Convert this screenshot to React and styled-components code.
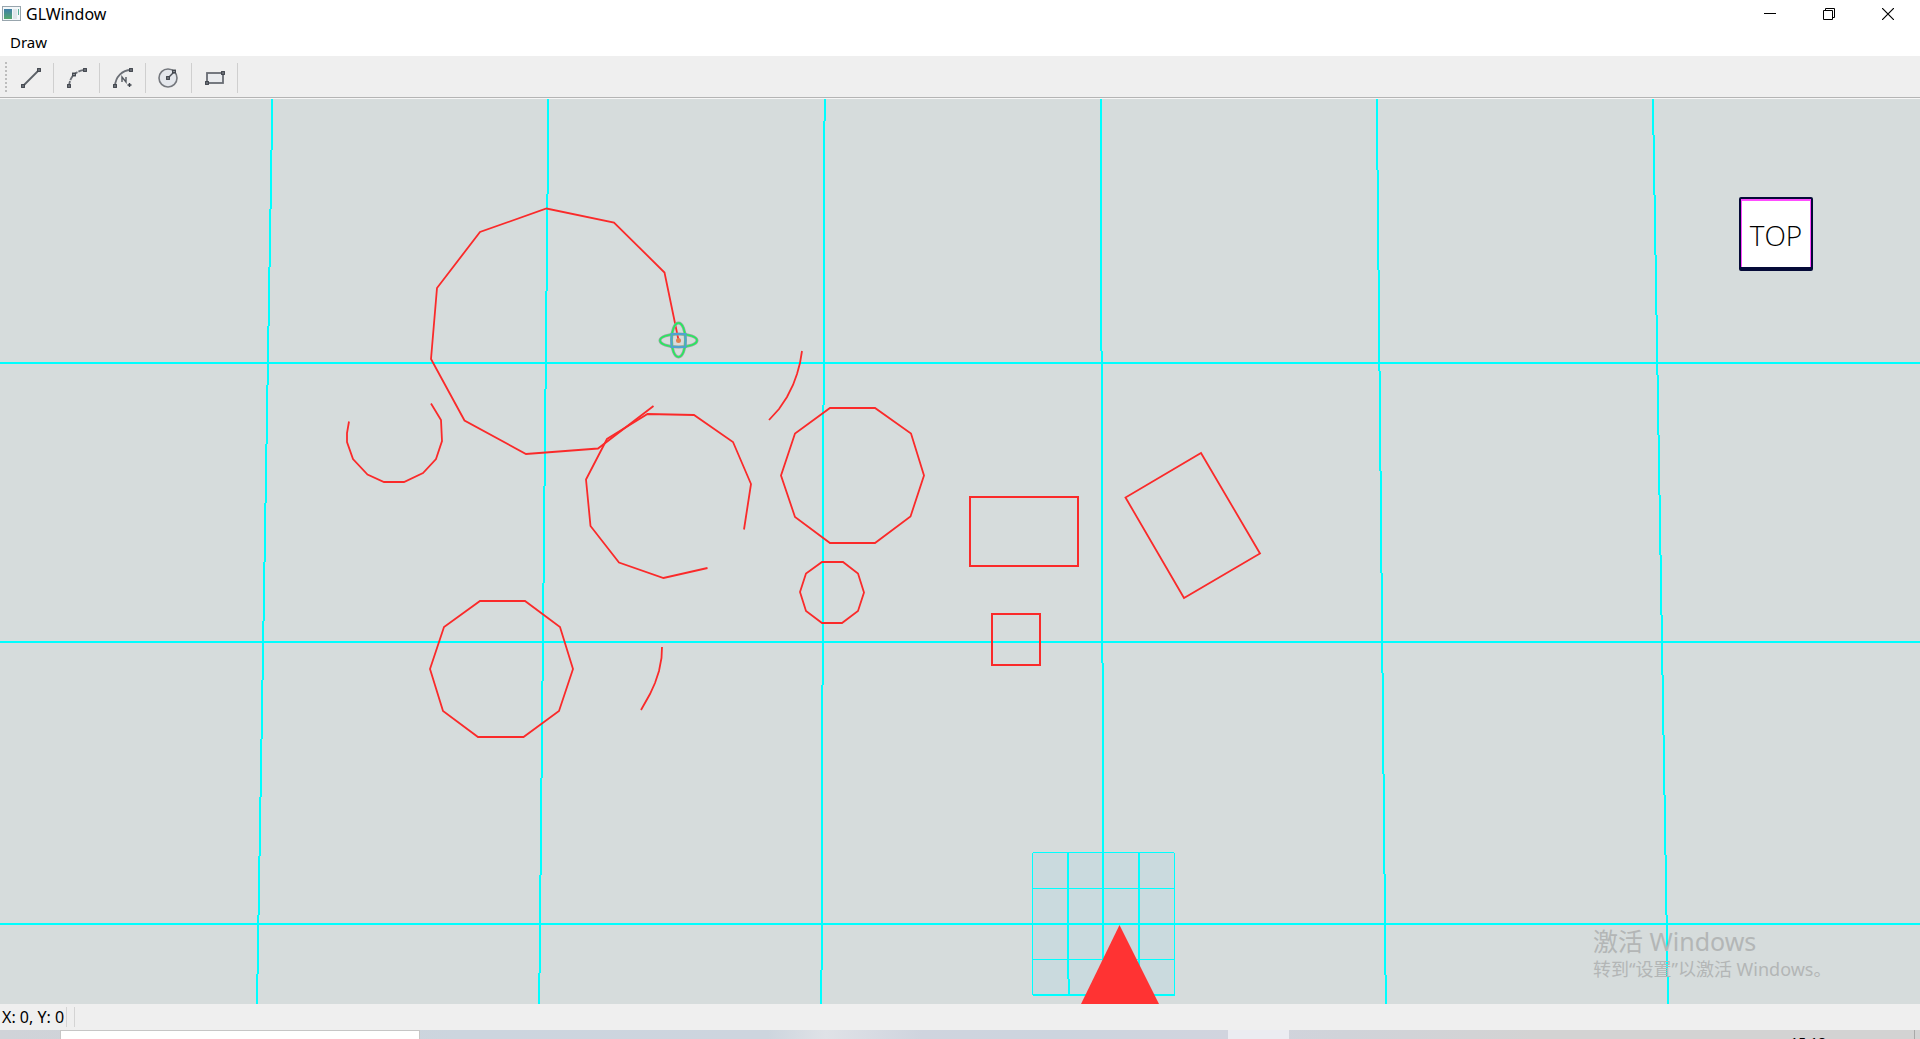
import React from "react";
import styled, { createGlobalStyle } from "styled-components";

const Global = createGlobalStyle`
  *, *::before, *::after { box-sizing: border-box; }
  body {
    margin: 0;
    overflow: hidden;
    font-family: "Noto Sans", "Noto Sans CJK SC", sans-serif;
    font-size: 15px;
    line-height: 20px;
    color: #000;
  }
  button {
    font: inherit;
    color: inherit;
    border: 0;
    padding: 0;
    background: transparent;
  }
`;

const Desktop = styled.div`
  display: flex;
  flex-direction: column;
  height: 100vh;
  overflow: hidden;
`;

const TitleBar = styled.header`
  display: flex;
  align-items: center;
  height: 28px;
  padding-left: 2px;
  background: #fff;
`;

const Title = styled.h1`
  flex: 1;
  margin: 0 0 0 5px;
  font-size: 16px;
  font-weight: 400;
`;

const WindowButton = styled.button`
  display: grid;
  place-items: center;
  width: 59px;
  height: 28px;
`;

const WindowControls = styled.div`
  display: flex;
  padding-right: 3px;
`;

const MenuBar = styled.nav`
  display: flex;
  height: 28px;
  padding-left: 2px;
  background: #fff;
`;

const MenuItem = styled.button`
  padding: 0 8px;
`;

const Toolbar = styled.div`
  display: flex;
  align-items: center;
  height: 43px;
  padding-top: 1px;
  padding-left: 5px;
  background: #efefef;
  border-bottom: 1px solid #f6f6f6;
  box-shadow: inset 0 -1px #b4b4b4;
`;

const Grip = styled.div`
  width: 2px;
  height: 32px;
  margin-right: 1px;
  background: repeating-linear-gradient(#bdbdbd 0 2px, transparent 2px 4px);
`;

const ToolCell = styled.div`
  display: grid;
  place-items: center;
  width: 46px;
  height: 30px;
  border-right: 1px solid #cfcfcf;
`;

const ToolButton = styled.button`
  display: grid;
  place-items: center;
  width: 30px;
  height: 30px;
`;

const Canvas = styled.main`
  position: relative;
  flex: 1;
  min-height: 0;
  overflow: hidden;
  background: #d6dcdc;
`;

const Scene = styled.svg`
  display: block;
  width: 100%;
  height: 100%;
`;

const ViewCube = styled.button`
  position: absolute;
  top: 98px;
  right: 107px;
  width: 74px;
  height: 74px;
  border: 2px solid #050b38;
  border-bottom-width: 4px;
  border-radius: 2px;
  background: #fff;
  box-shadow: inset 1px 2px #ff4dff, inset -1px 0 #ff4dff;
  color: #000;
  font-family: "Open Sans", sans-serif;
  font-size: 28px;
  font-weight: 300;
  line-height: 68px;
  padding-top: 2px;
`;

const Watermark = styled.aside`
  position: absolute;
  left: 1593px;
  bottom: 23px;
  color: #b3b6b6;
  white-space: nowrap;
`;

const WatermarkTitle = styled.p`
  margin: 0;
  font-size: 25px;
  line-height: 32px;
`;

const WatermarkText = styled.p`
  margin: 0;
  font-size: 18px;
  line-height: 24px;
`;

const StatusBar = styled.footer`
  display: flex;
  align-items: center;
  height: 26px;
  padding-left: 2px;
  background: #efefef;
`;

const StatusCell = styled.span`
  height: 20px;
  padding-right: ${(p) => p.$gap}px;
  border-right: 1px solid #d4d4d4;
  font-size: 16px;
`;

const Taskbar = styled.div`
  display: flex;
  height: 9px;
  overflow: hidden;
  background: linear-gradient(90deg, #d0d3d8 0, #ccd5de 24%, #cdd5de 40%, #dfe2e7 43%, #cfd4de 48%, #ccd4de 55%, #d1d4de 64%, #d0d3d9 70%, #d3d3d3 80%, #d3d3d3 100%);
`;

const TaskSearch = styled.div`
  width: 360px;
  margin-left: 60px;
  border: 1px solid #c6c6c6;
  border-bottom: 0;
  background: #fff;
`;

const TaskApp = styled.div`
  width: 61px;
  margin-left: 808px;
  background: #ebecf1;
`;

const Clock = styled.time`
  margin: 3px 88px 0 auto;
  font-size: 14px;
`;

const ShowDesktop = styled.div`
  width: 6px;
  border-left: 1px solid #a8a8a8;
`;

function Node({ x, y }) {
  return <rect x={x - 1.25} y={y - 1.25} width="2.5" height="2.5" fill="#c9ccd0" stroke="#3f444c" strokeWidth="1.4" />;
}

const TOOLS = [
  {
    label: "Line",
    art: (
      <>
        <path d="M4 20 20 4" stroke="#5b6067" strokeWidth="1.8" />
        <Node x={4} y={20} />
        <Node x={20} y={4} />
      </>
    ),
  },
  {
    label: "Three point arc",
    art: (
      <>
        <path d="M4 20C4.500 15 6 11.500 9 8.500C12 6 16 4 20 4" stroke="#6b6f76" strokeWidth="1.8" strokeDasharray="5 1" />
        <Node x={4} y={20} />
        <Node x={9} y={8.5} />
        <Node x={20} y={4} />
      </>
    ),
  },
  {
    label: "N point arc",
    art: (
      <>
        <path d="M4 20C4.500 11 11 4 20 4" stroke="#6b6f76" strokeWidth="1.8" />
        <path d="M11 16V11L15 16V11" stroke="#555a61" strokeWidth="1.4" />
        <path d="M16.500 19h4M18.500 17v4" stroke="#3f444c" strokeWidth="1.4" />
        <Node x={4} y={20} />
        <Node x={20} y={4} />
      </>
    ),
  },
  {
    label: "Circle",
    art: (
      <>
        <circle cx="11" cy="12" r="9" fill="#e4e7ec" stroke="#74777d" strokeWidth="1.6" />
        <path d="M11 12 17 6" stroke="#4b4f56" strokeWidth="1.5" />
        <Node x={11} y={12} />
        <Node x={17} y={5.5} />
      </>
    ),
  },
  {
    label: "Rectangle",
    art: (
      <>
        <rect x="4" y="7" width="16" height="10" fill="#e9ebee" stroke="#686c73" strokeWidth="1.8" />
        <Node x={4} y={17} />
        <Node x={20} y={7} />
      </>
    ),
  },
];

const GRID_COLUMNS = [0, 1, 2, 3, 4, 5].map((i) => [272.4 + 276.1 * i, 257 + 282.2 * i]);
const GRID_ROWS = [363, 642, 924];

const OPEN_SHAPES = [
  "653.5,406 598,448.5 526,454 464.5,420.5 431,359 437,288 480,232 546.5,208.5 614,222.5 664.5,272.5 678.5,340",
  "707.5,568 663.5,578 619,562.5 590.5,526 586,479.5 607,439 647.5,414 694,415 733,442 751,484 744,529.5",
  "349,421.5 347,433 347,442 353,459 367.5,474.5 384,482 404,482 423,473 436,459 442,441 441,420 431,403.5",
  "802,351 800,363 797,374 793,385 787,397 779,409 769,420",
  "662,647 661.5,658 659,671 655,683 650,694 641,710",
];

const CLOSED_SHAPES = [
  "830,408 875,408 911,433.5 924,475.5 910.5,516.5 875,543 830,543 795,517 781,475.5 795,433.5",
  "822,562 843,562 858,573.5 864,592.5 858,611 842,623 822,623 806,611 800,592 806,573.5",
  "480,601 525,601 560,627 573,669 559,711 523.5,737 478,737 443,711 430,669 444,627",
  "1201,453 1260,553.5 1184,598 1125.5,497.5",
];

function Drawing() {
  return (
    <Scene viewBox="0 99 1920 905" preserveAspectRatio="xMinYMax slice" fill="none" role="img" aria-label="Drawing">
      <rect x="1032.5" y="852.5" width="142" height="142" fill="#cadade" />
      <g stroke="#00ffff" strokeWidth="2" shapeRendering="crispEdges">
        {GRID_COLUMNS.map(([top, bottom]) => (
          <line key={top} x1={top} y1="98" x2={bottom} y2="1004" />
        ))}
        {GRID_ROWS.map((y) => (
          <line key={y} x1="0" y1={y} x2="1920" y2={y} />
        ))}
        <path d="M1068 853V979M1069 979V995M1103 853V995M1139 853V995M1033 995H1175" />
        <path strokeWidth="1" d="M1032.500 853V995M1174.500 853V995M1033 852.500H1174M1033 888.500H1174M1033 959.500H1174" />
      </g>
      <g stroke="#fa2a2a" strokeWidth="1.8">
        {OPEN_SHAPES.map((points) => (
          <polyline key={points} points={points} />
        ))}
        {CLOSED_SHAPES.map((points) => (
          <polygon key={points} points={points} />
        ))}
        <rect x="970" y="497" width="108" height="69" strokeWidth="2" />
        <rect x="992" y="614" width="48" height="51" strokeWidth="2" />
      </g>
      <path d="M1119.500 925 1159 1004H1081Z" fill="#ff3333" />
      <g strokeWidth="2">
        <ellipse cx="678.5" cy="340.500" rx="18.5" ry="6.500" stroke="#8fa99b" strokeWidth="3" />
        <ellipse cx="678.5" cy="340" rx="7" ry="17" stroke="#8fa99b" strokeWidth="3" />
        <ellipse cx="678.5" cy="340.500" rx="18.500" ry="6.500" stroke="#1ff05a" strokeWidth="1.5" />
        <ellipse cx="678.5" cy="340" rx="7" ry="17" stroke="#1ff05a" strokeWidth="1.5" />
        <rect x="671.500" y="334" width="14" height="13" stroke="#4fa3cf" />
        <circle cx="678.5" cy="340.500" r="2.500" fill="#e08050" />
      </g>
    </Scene>
  );
}

export default function App() {
  return (
    <Desktop>
      <Global />
      <TitleBar>
        <svg width="19" height="16" viewBox="0 0 19 16" aria-hidden="true">
          <defs>
            <linearGradient id="appIcon" x1="0" y1="0" x2="0" y2="1">
              <stop offset="0" stopColor="#3f7fa8" />
              <stop offset="1" stopColor="#55a86c" />
            </linearGradient>
          </defs>
          <rect x="0.500" y="0.500" width="18" height="14" fill="#f4f8fa" stroke="#98a5ad" />
          <rect x="2" y="3" width="8" height="10" fill="url(#appIcon)" />
          <rect x="11" y="3" width="4" height="10" fill="#dfe6ea" />
          <rect x="16" y="3" width="1" height="6" fill="#5bb09a" />
        </svg>
        <Title>GLWindow</Title>
        <WindowControls>
          <WindowButton aria-label="Minimize">
            <svg width="12" height="12" viewBox="0 0 12 12" stroke="#000"><path d="M0 5.500H12" /></svg>
          </WindowButton>
          <WindowButton aria-label="Restore">
            <svg width="12" height="12" viewBox="0 0 12 12" fill="none" stroke="#000">
              <path d="M0.500 2.500H9.500V11.500H0.500ZM2.500 2.500V0.500H11.500V9.500H9.500" />
            </svg>
          </WindowButton>
          <WindowButton aria-label="Close">
            <svg width="12" height="12" viewBox="0 0 12 12" fill="none" stroke="#000" strokeWidth="1.2">
              <path d="M0 0 12 12M12 0 0 12" />
            </svg>
          </WindowButton>
        </WindowControls>
      </TitleBar>
      <MenuBar>
        <MenuItem>Draw</MenuItem>
      </MenuBar>
      <Toolbar role="toolbar" aria-label="Draw tools">
        <Grip />
        {TOOLS.map(({ label, art }) => (
          <ToolCell key={label}>
            <ToolButton aria-label={label}>
              <svg width="24" height="24" viewBox="0 0 24 24" fill="none">{art}</svg>
            </ToolButton>
          </ToolCell>
        ))}
      </Toolbar>
      <Canvas>
        <Drawing />
        <ViewCube>TOP</ViewCube>
        <Watermark>
          <WatermarkTitle>激活 Windows</WatermarkTitle>
          <WatermarkText>转到“设置”以激活 Windows。</WatermarkText>
        </Watermark>
      </Canvas>
      <StatusBar>
        <StatusCell $gap={2}>X: 0, Y: 0</StatusCell>
        <StatusCell $gap={7} />
      </StatusBar>
      <Taskbar>
        <TaskSearch />
        <TaskApp />
        <Clock>15:18</Clock>
        <ShowDesktop />
      </Taskbar>
    </Desktop>
  );
}
